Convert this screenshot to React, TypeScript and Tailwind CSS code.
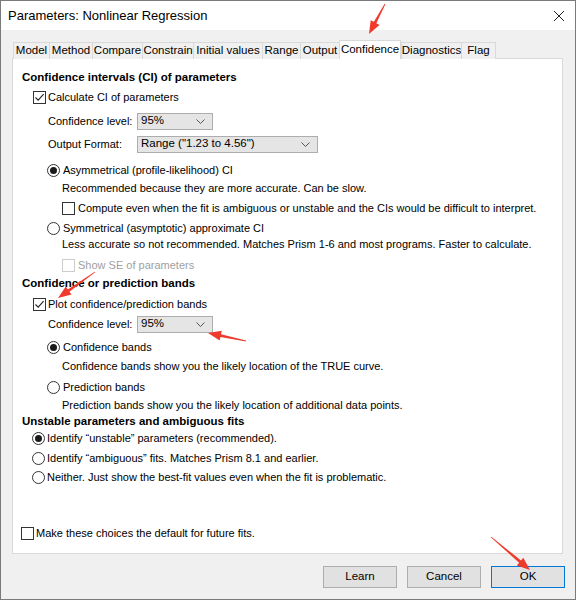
import React from "react";

function Check({ checked = false, disabled = false }: { checked?: boolean; disabled?: boolean }) {
  return (
    <span
      className={`w-[13px] h-[13px] border bg-white flex items-center justify-center shrink-0 ${
        disabled ? "border-[#cccccc]" : "border-[#333333]"
      }`}
    >
      {checked && (
        <svg width="11" height="11" viewBox="0 0 11 11">
          <path d="M1.5 5.5 L4.2 8.2 L9.6 2.2" fill="none" stroke="#222" strokeWidth="1.1" />
        </svg>
      )}
    </span>
  );
}

function Radio({ on = false }: { on?: boolean }) {
  return (
    <span className="w-[13px] h-[13px] rounded-full border border-[#333333] bg-white flex items-center justify-center shrink-0">
      {on && <span className="w-[7px] h-[7px] rounded-full bg-[#1a1a1a]" />}
    </span>
  );
}

function Select({ value, wide = false }: { value: string; wide?: boolean }) {
  return (
    <div
      className={`h-[17px] border border-[#adadad] bg-[#e5e5e5] flex items-center justify-between pl-[3px] pr-[7px] text-[11.5px] ${
        wide ? "w-[181px]" : "w-[76px]"
      }`}
    >
      <span>{value}</span>
      <svg width="9" height="5" viewBox="0 0 9 5">
        <path d="M0.5 0.5 L4.5 4.5 L8.5 0.5" fill="none" stroke="#555" strokeWidth="1" />
      </svg>
    </div>
  );
}

// tapered red arrow from tail to tip
function Arrow({ tail, tip }: { tail: [number, number]; tip: [number, number] }) {
  const dx = tip[0] - tail[0];
  const dy = tip[1] - tail[1];
  const len = Math.hypot(dx, dy);
  const ux = dx / len;
  const uy = dy / len;
  const nx = -uy;
  const ny = ux;
  const hl = 13;
  const hw = 5;
  const bx = tip[0] - ux * hl;
  const by = tip[1] - uy * hl;
  const pts = [
    [tail[0] + nx * 0.4, tail[1] + ny * 0.4],
    [bx + nx * 1.4, by + ny * 1.4],
    [bx + nx * hw, by + ny * hw],
    [tip[0], tip[1]],
    [bx - nx * hw, by - ny * hw],
    [bx - nx * 1.4, by - ny * 1.4],
    [tail[0] - nx * 0.4, tail[1] - ny * 0.4],
  ]
    .map((p) => p.join(","))
    .join(" ");
  return <polygon points={pts} fill="#f03a2c" />;
}

const tabs = [
  { name: "Model", w: "w-[36px]" },
  { name: "Method", w: "w-[43px]" },
  { name: "Compare", w: "w-[50px]" },
  { name: "Constrain", w: "w-[51px]" },
  { name: "Initial values", w: "w-[69px]" },
  { name: "Range", w: "w-[38px]" },
  { name: "Output", w: "w-[39px]" },
  { name: "Confidence", w: "w-[62px]" },
  { name: "Diagnostics", w: "w-[60px]" },
  { name: "Flag", w: "w-[35px]" },
];

export default function App() {
  return (
    <div className="relative w-[576px] h-[600px] border border-[#7a7a7a] bg-[#f0f0f0] flex flex-col text-[11px] text-black font-['Liberation_Sans',Arial,sans-serif] whitespace-nowrap">
      {/* title bar */}
      <div className="h-[29px] bg-white flex items-center justify-between pl-[7px] pr-[10px] shrink-0">
        <span className="text-[13px]">Parameters: Nonlinear Regression</span>
        <svg width="12" height="12" viewBox="0 0 12 12">
          <path d="M1 1 L11 11 M11 1 L1 11" stroke="#222" strokeWidth="1" />
        </svg>
      </div>

      {/* tab strip */}
      <div className="flex items-end h-[18px] mt-[11px] ml-[12px] relative z-10 -mb-[1px] text-[11.5px]">
        {tabs.map((t, i) => {
          const active = t.name === "Confidence";
          return (
            <div
              key={t.name}
              className={`${t.w} flex items-center justify-center border-t border-l border-[#d9d9d9] ${
                i === tabs.length - 1 ? "border-r" : ""
              } ${active ? "h-[19px] bg-white border-r" : "h-[17px] bg-[#f0f0f0]"}`}
            >
              {t.name}
            </div>
          );
        })}
      </div>

      {/* options panel */}
      <div className="ml-[11px] w-[551px] h-[496px] border border-[#d9d9d9] bg-white pl-[9px] pt-[11px] flex flex-col shrink-0">
        <div className="h-[16px] flex items-center font-bold text-[11.5px]">Confidence intervals (CI) of parameters</div>
        <div className="h-[16px] flex items-center gap-[2px] ml-[11px] mt-[3px]">
          <Check checked />
          <span>Calculate CI of parameters</span>
        </div>
        <div className="h-[16px] flex items-center ml-[26px] mt-[8px]">
          <span className="w-[89px]">Confidence level:</span>
          <Select value="95%" />
        </div>
        <div className="h-[16px] flex items-center ml-[26px] mt-[7px]">
          <span className="w-[89px]">Output Format:</span>
          <Select value={'Range ("1.23 to 4.56")'} wide />
        </div>
        <div className="h-[16px] flex items-center gap-[3px] ml-[25px] mt-[10px]">
          <Radio on />
          <span>Asymmetrical (profile-likelihood) CI</span>
        </div>
        <div className="h-[16px] flex items-center ml-[40px] mt-[2px]">
          Recommended because they are more accurate. Can be slow.
        </div>
        <div className="h-[16px] flex items-center gap-[3px] ml-[40px] mt-[4px]">
          <Check />
          <span>Compute even when the fit is ambiguous or unstable and the CIs would be difficult to interpret.</span>
        </div>
        <div className="h-[16px] flex items-center gap-[3px] ml-[25px] mt-[4px]">
          <Radio />
          <span>Symmetrical (asymptotic) approximate CI</span>
        </div>
        <div className="h-[16px] flex items-center ml-[40px]">
          Less accurate so not recommended. Matches Prism 1-6 and most programs. Faster to calculate.
        </div>
        <div className="h-[16px] flex items-center gap-[3px] ml-[40px] mt-[5px] text-[#a0a0a0]">
          <Check disabled />
          <span>Show SE of parameters</span>
        </div>

        <div className="h-[16px] flex items-center font-bold text-[11.5px] mt-[3px]">Confidence or prediction bands</div>
        <div className="h-[16px] flex items-center gap-[2px] ml-[11px] mt-[4px]">
          <Check checked />
          <span>Plot confidence/prediction bands</span>
        </div>
        <div className="h-[16px] flex items-center ml-[26px] mt-[4px]">
          <span className="w-[89px]">Confidence level:</span>
          <Select value="95%" />
        </div>
        <div className="h-[16px] flex items-center gap-[3px] ml-[25px] mt-[7px]">
          <Radio on />
          <span>Confidence bands</span>
        </div>
        <div className="h-[16px] flex items-center ml-[40px] mt-[3px]">
          Confidence bands show you the likely location of the TRUE curve.
        </div>
        <div className="h-[16px] flex items-center gap-[3px] ml-[25px] mt-[5px]">
          <Radio />
          <span>Prediction bands</span>
        </div>
        <div className="h-[16px] flex items-center ml-[40px] mt-[2px]">
          Prediction bands show you the likely location of additional data points.
        </div>

        <div className="h-[16px] flex items-center font-bold text-[11.5px] mt-[1px]">Unstable parameters and ambiguous fits</div>
        <div className="h-[16px] flex items-center gap-[2px] ml-[10px]">
          <Radio on />
          <span>Identify “unstable” parameters (recommended).</span>
        </div>
        <div className="h-[16px] flex items-center gap-[2px] ml-[10px] mt-[4px]">
          <Radio />
          <span>Identify “ambiguous” fits. Matches Prism 8.1 and earlier.</span>
        </div>
        <div className="h-[16px] flex items-center gap-[2px] ml-[10px] mt-[3px]">
          <Radio />
          <span>Neither. Just show the best-fit values even when the fit is problematic.</span>
        </div>

        <div className="h-[16px] flex items-center gap-[2px] -ml-[1px] mt-[40px]">
          <Check />
          <span>Make these choices the default for future fits.</span>
        </div>
      </div>

      {/* dialog buttons */}
      <div className="flex justify-end gap-[10px] pr-[10px] mt-[12px] text-[11.5px]">
        <button className="w-[74px] h-[22px] border border-[#adadad] bg-[#e1e1e1]">Learn</button>
        <button className="w-[74px] h-[22px] border border-[#adadad] bg-[#e1e1e1]">Cancel</button>
        <button className="w-[74px] h-[22px] border border-[#0078d7] bg-[#e1e1e1]">OK</button>
      </div>

      {/* red annotation arrows */}
      <svg className="absolute left-[-1px] top-[-1px] pointer-events-none z-20" width="576" height="600">
        <Arrow tail={[385, 4]} tip={[369, 34]} />
        <Arrow tail={[95, 272]} tip={[58, 298]} />
        <Arrow tail={[246, 341]} tip={[208, 333]} />
        <Arrow tail={[491, 537]} tip={[530, 570]} />
      </svg>
    </div>
  );
}
